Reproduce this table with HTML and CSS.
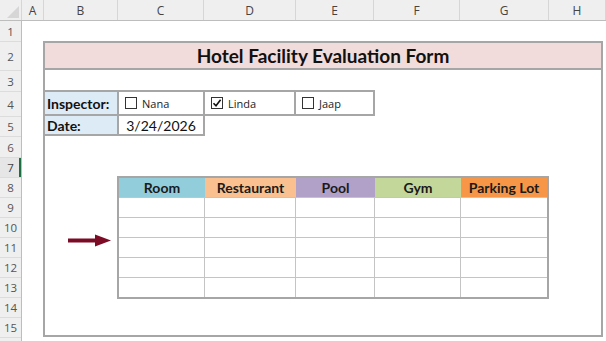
FILE: index.html
```
<!DOCTYPE html>
<html>
<head>
<meta charset="utf-8">
<link rel="stylesheet" href="styles.css">
</head>
<body>
<div class="sheet">
  <div class="colhdr">
    <div class="corner"><svg width="12" height="12" viewBox="0 0 12 12"><polygon points="12,0 12,12 0,12" fill="#d6d6d6"/></svg></div>
    <div class="ch c-a">A</div>
    <div class="ch c-b">B</div>
    <div class="ch c-c">C</div>
    <div class="ch c-d">D</div>
    <div class="ch c-e">E</div>
    <div class="ch c-f">F</div>
    <div class="ch c-g">G</div>
    <div class="ch c-h">H</div>
  </div>
  <div class="body">
    <div class="rowhdr">
      <div class="rh h21">1</div>
      <div class="rh h29">2</div>
      <div class="rh h21">3</div>
      <div class="rh h25">4</div>
      <div class="rh h20">5</div>
      <div class="rh h21">6</div>
      <div class="rh h20 sel">7</div>
      <div class="rh h20">8</div>
      <div class="rh h20">9</div>
      <div class="rh h20">10</div>
      <div class="rh h20">11</div>
      <div class="rh h20">12</div>
      <div class="rh h20">13</div>
      <div class="rh h20">14</div>
      <div class="rh h20">15</div>
      <div class="rh h20"></div>
    </div>
    <div class="area">
      <div class="frame">
        <div class="title">Hotel Facility Evaluation Form</div>
        <div class="inspector">
          <div class="lbl">Inspector:</div>
          <div class="opt o1"><span class="cb"></span>Nana</div>
          <div class="opt o2"><span class="cb"><svg width="10" height="10" viewBox="0 0 10 10"><path d="M1.5 5.2 L4 7.8 L8.6 1.8" fill="none" stroke="#111" stroke-width="1.6"/></svg></span>Linda</div>
          <div class="opt o3"><span class="cb"></span>Jaap</div>
        </div>
        <div class="daterow">
          <div class="lbl">Date:</div>
          <div class="val">3/24/2026</div>
        </div>
        <div class="tbl">
          <div class="thead">
            <div class="th k1 room">Room</div>
            <div class="th k2 rest">Restaurant</div>
            <div class="th k3 pool">Pool</div>
            <div class="th k4 gym">Gym</div>
            <div class="th k5 park">Parking Lot</div>
          </div>
          <div class="tr"><div class="td k1"></div><div class="td k2"></div><div class="td k3"></div><div class="td k4"></div><div class="td k5"></div></div>
          <div class="tr"><div class="td k1"></div><div class="td k2"></div><div class="td k3"></div><div class="td k4"></div><div class="td k5"></div></div>
          <div class="tr"><div class="td k1"></div><div class="td k2"></div><div class="td k3"></div><div class="td k4"></div><div class="td k5"></div></div>
          <div class="tr"><div class="td k1"></div><div class="td k2"></div><div class="td k3"></div><div class="td k4"></div><div class="td k5"></div></div>
          <div class="tr"><div class="td k1"></div><div class="td k2"></div><div class="td k3"></div><div class="td k4"></div><div class="td k5"></div></div>
        </div>
        <svg class="arrow" width="43" height="13" viewBox="0 0 43 13">
          <rect x="0" y="4.5" width="29" height="4" fill="#7c0c26"/>
          <polygon points="27,0.5 43,6.5 27,12.5" fill="#7c0c26"/>
        </svg>
      </div>
    </div>
  </div>
</div>
</body>
</html>
```
FILE: styles.css
```
* { box-sizing: border-box; }
html, body { margin: 0; padding: 0; background: #fff; }
body { width: 606px; height: 341px; overflow: hidden; font-family: Lato, "Liberation Sans", sans-serif; }

.sheet { width: 606px; height: 341px; overflow: hidden; }

.colhdr {
  display: flex;
  height: 21px;
  background: #efefef;
  border-bottom: 1px solid #bdbdbd;
}
.corner {
  width: 22px;
  border-right: 1px solid #d6d6d6;
  display: flex;
  align-items: flex-end;
  justify-content: flex-end;
  padding: 0 2px 2px 0;
}
.ch {
  border-right: 1px solid #d6d6d6;
  display: flex;
  align-items: center;
  justify-content: center;
  font-family: "Open Sans", "Noto Sans", sans-serif;
  font-size: 12px;
  color: #444;
}
.c-a { width: 22px; }
.c-b { width: 74px; }
.c-c { width: 86px; }
.c-d { width: 92px; }
.c-e { width: 78px; }
.c-f { width: 86px; }
.c-g { width: 89px; }
.c-h { width: 57px; }

.body { display: flex; }
.rowhdr {
  width: 22px;
  flex: none;
  background: #efefef;
  border-right: 1px solid #bdbdbd;
}
.rh {
  display: flex;
  align-items: center;
  justify-content: center;
  border-bottom: 1px solid #dcdcdc;
  font-family: "Open Sans", "Noto Sans", sans-serif;
  font-size: 11.5px;
  color: #555;
}
.h20 { height: 20px; }
.h21 { height: 21px; }
.h25 { height: 25px; }
.h29 { height: 29px; }
.rh.sel { box-shadow: inset -2px 0 0 #1e6e43; color: #444; background: #e6e6e6; }

.area { flex: 1; }

.frame {
  position: relative;
  margin: 20px 0 0 21px;
  width: 560px;
  height: 296px;
  border: 2px solid #a6a6a6;
}
.title {
  height: 27px;
  background: #f2dcdb;
  border-bottom: 2px solid #a6a6a6;
  text-align: center;
  font-weight: 700;
  font-size: 19px;
  line-height: 25px;
  color: #111;
}

.inspector {
  margin-top: 20px;
  display: flex;
  width: 330px;
  height: 26px;
  border-top: 2px solid #a6a6a6;
  border-bottom: 2px solid #a6a6a6;
}
.daterow {
  display: flex;
  width: 160px;
  height: 20px;
  border-bottom: 2px solid #a6a6a6;
}
.lbl {
  width: 74px;
  background: #ddebf7;
  border-right: 2px solid #a6a6a6;
  font-weight: 700;
  font-size: 14px;
  color: #111;
  padding-left: 2px;
  display: flex;
  align-items: center;
}
.opt {
  display: flex;
  align-items: center;
  border-right: 2px solid #a6a6a6;
  padding-left: 6px;
  font-family: "Open Sans", "Noto Sans", sans-serif;
  font-size: 11px;
  color: #222;
}
.o1 { width: 86px; }
.o2 { width: 91px; }
.o3 { width: 79px; }
.cb {
  width: 12px;
  height: 12px;
  border: 1px solid #333;
  background: #fff;
  margin-right: 5px;
  display: flex;
  align-items: center;
  justify-content: center;
}
.val {
  width: 86px;
  border-right: 2px solid #a6a6a6;
  display: flex;
  align-items: center;
  justify-content: center;
  font-size: 14px;
  color: #111;
}

.tbl {
  margin: 40px 0 0 72px;
  width: 432px;
  border: 2px solid #a6a6a6;
}
.thead { display: flex; height: 19px; }
.th {
  display: flex;
  align-items: center;
  justify-content: center;
  font-weight: 700;
  font-size: 14px;
  color: #1a1a1a;
}
.room { background: #92cddc; }
.rest { background: #fac090; }
.pool { background: #b1a0c7; }
.gym { background: #c4d79b; }
.park { background: #f79646; }
.tr { display: flex; height: 20px; border-top: 1px solid #c4c4c4; }
.td { border-right: 1px solid #c4c4c4; }
.td.k5 { border-right: none; }
.k1 { width: 86px; }
.k2 { width: 91px; }
.k3 { width: 79px; }
.k4 { width: 86px; }
.k5 { width: 86px; }

.arrow {
  position: absolute;
  left: 23px;
  top: 191px;
}
```
